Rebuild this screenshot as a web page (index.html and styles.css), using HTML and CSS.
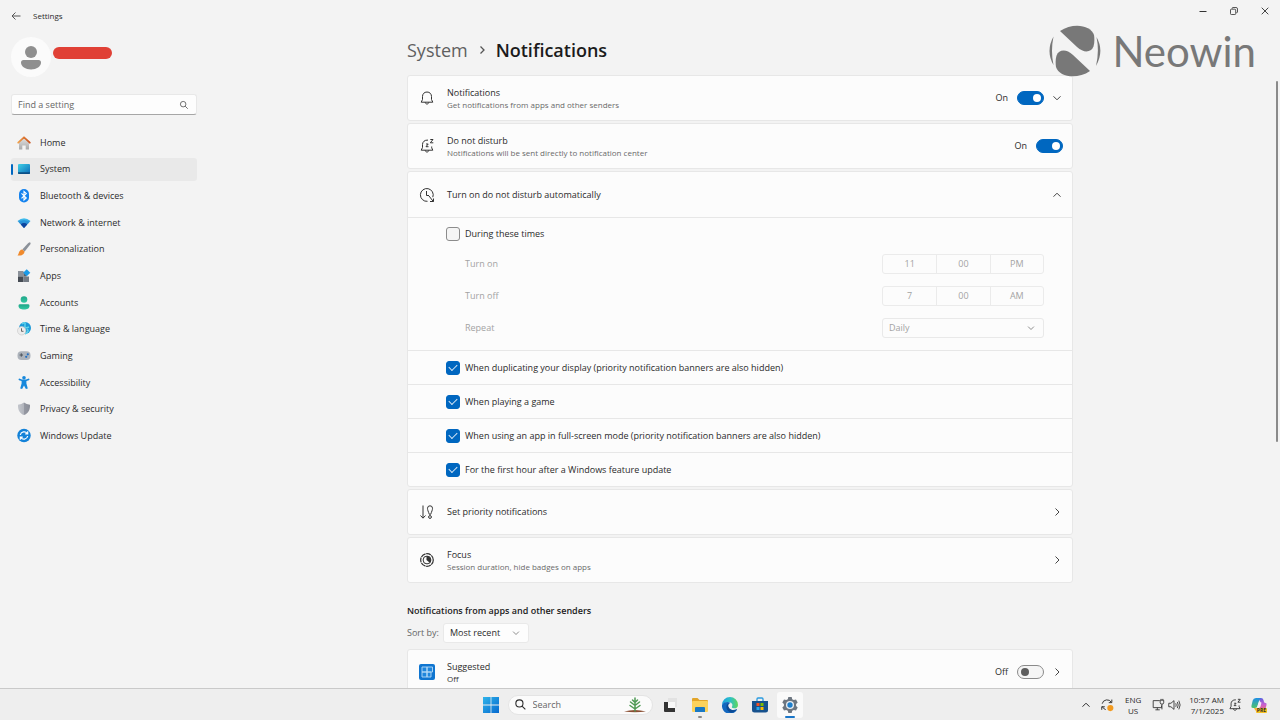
FILE: index.html
```html
<!DOCTYPE html>
<html lang="en">
<head>
<meta charset="utf-8">
<title>Settings</title>
<meta name="viewport" content="width=device-width, initial-scale=1">
<link rel="stylesheet" href="styles.css">
</head>
<body>
<svg class="defs" aria-hidden="true">
  <defs>
    <linearGradient id="g-sys" x1="0" y1="0" x2="1" y2="1"><stop offset="0" stop-color="#3fd0e6"/><stop offset="1" stop-color="#0a6ab8"/></linearGradient>
    <linearGradient id="g-roof" x1="0" y1="0" x2="1" y2="0"><stop offset="0" stop-color="#f0a04b"/><stop offset="1" stop-color="#c9501c"/></linearGradient>
    <linearGradient id="g-wall" x1="0" y1="0" x2="0" y2="1"><stop offset="0" stop-color="#e4e4e4"/><stop offset="1" stop-color="#a9a9a9"/></linearGradient>
    <linearGradient id="g-net" x1="0" y1="0" x2="0" y2="1"><stop offset="0" stop-color="#45c6f2"/><stop offset="1" stop-color="#0a4fb0"/></linearGradient>
    <linearGradient id="g-acc" x1="0" y1="0" x2="0" y2="1"><stop offset="0" stop-color="#1fa588"/><stop offset="1" stop-color="#35c9a4"/></linearGradient>
    <linearGradient id="g-shield" x1="0" y1="0" x2="1" y2="0"><stop offset="0" stop-color="#c3c6cc"/><stop offset=".5" stop-color="#b0b3bb"/><stop offset=".51" stop-color="#9598a2"/><stop offset="1" stop-color="#8a8d97"/></linearGradient>
    <linearGradient id="g-win" x1="0" y1="0" x2="1" y2="1"><stop offset="0" stop-color="#2fb4ea"/><stop offset="1" stop-color="#0669cf"/></linearGradient>
    <linearGradient id="g-edge" x1="0" y1="0" x2="1" y2="0"><stop offset="0" stop-color="#1d9fe0"/><stop offset=".5" stop-color="#2bbfc9"/><stop offset="1" stop-color="#62d75a"/></linearGradient>
    <linearGradient id="g-cop" x1="0" y1="0" x2="0" y2="1"><stop offset="0" stop-color="#5c5fe0"/><stop offset=".5" stop-color="#c860d0"/><stop offset="1" stop-color="#f0706a"/></linearGradient>
    <linearGradient id="g-cop2" x1="0" y1="0" x2="0" y2="1"><stop offset="0" stop-color="#1e8fe6"/><stop offset="1" stop-color="#4fc26a"/></linearGradient>
    <symbol id="i-down" viewBox="0 0 12 12"><path d="M2.500 4.300L6 7.800l3.500-3.500" fill="none" stroke="currentColor"/></symbol>
    <symbol id="i-up" viewBox="0 0 12 12"><path d="M2.500 7.700L6 4.200l3.500 3.500" fill="none" stroke="currentColor"/></symbol>
    <symbol id="i-right" viewBox="0 0 12 12"><path d="M4.500 2.500L8 6l-3.500 3.500" fill="none" stroke="currentColor"/></symbol>
    <symbol id="i-search" viewBox="0 0 12 12"><path d="M8.300 5a3.300 3.300 0 1 1-6.600 0a3.300 3.300 0 0 1 6.600 0zM7.400 7.400L10.500 10.500" fill="none" stroke="currentColor"/></symbol>
    <symbol id="i-dnd" viewBox="0 0 16 16"><path d="M9 2.100C5.500 1.800 3.500 4 3.500 6.500V9.500L2.200 12.200H13.800L12.700 9.800V8.500M6.200 12.300c.3 2.300 3.300 2.300 3.600 0" fill="none" stroke="currentColor" stroke-linejoin="round"/><path d="M7 6h2.200L7 8.700h2.500M11.300 1.500h2.700L11.300 4.800h3" fill="none" stroke="currentColor"/></symbol>
  </defs>
</svg>

<div class="screen">
  <div class="window">
    <header class="titlebar">
      <button class="icon-btn back" aria-label="Back"><svg viewBox="0 0 12 12"><path d="M10.500 6H2M5.500 2.500L2 6l3.500 3.500" fill="none" stroke="#555"/></svg></button>
      <span class="app-name">Settings</span>
      <div class="caption-btns">
        <button aria-label="Minimize"><svg viewBox="0 0 12 12"><path d="M2.500 6.500h7" stroke="#333" fill="none"/></svg></button>
        <button aria-label="Restore"><svg viewBox="0 0 12 12"><path d="M2.500 5a.8.8 0 0 1 .8-.8h3.600a.8.8 0 0 1 .8.8v3.700a.8.8 0 0 1-.8.8H3.300a.8.8 0 0 1-.8-.8zM4.200 3.800V3.200q0-.7.7-.7H8q1.500 0 1.500 1.500v3q0 .8-1.200.8" stroke="#444" stroke-width=".9" fill="none"/></svg></button>
        <button aria-label="Close"><svg viewBox="0 0 12 12"><path d="M2.700 2.700l6.600 6.600M9.300 2.700L2.700 9.300" stroke="#444" fill="none"/></svg></button>
      </div>
    </header>

    <div class="body">
      <aside class="sidebar">
        <div class="profile">
          <div class="avatar"><svg viewBox="0 0 40 40"><circle cx="20" cy="15" r="6" fill="#8f8f8f"/><path d="M12.500 23h15q2.500 0 2.500 2.500c0 4-4.500 7-10 7s-10-3-10-7Q10 23 12.500 23z" fill="#8f8f8f"/></svg></div>
          <div class="redacted"></div>
        </div>
        <label class="find">
          <input type="text" placeholder="Find a setting" aria-label="Find a setting">
          <svg viewBox="0 0 12 12"><use href="#i-search"/></svg>
        </label>
        <nav class="nav">
          <a href="#"><svg viewBox="0 0 16 16"><path d="M3 7l5-4.500L13 7v7.500H9.700v-4H6.300v4H3z" fill="url(#g-wall)"/><path d="M2.200 7.700L8 2.300l5.800 5.400" fill="none" stroke="url(#g-roof)" stroke-width="1.800" stroke-linecap="round" stroke-linejoin="round"/></svg><span>Home</span></a>
          <a href="#" class="active" aria-current="page"><svg viewBox="0 0 16 16"><rect x="2" y="3" width="12" height="10" rx="1" fill="url(#g-sys)"/><path d="M2 11.300h12v.7q0 1-1 1H3q-1 0-1-1z" fill="#0b4f86"/></svg><span>System</span></a>
          <a href="#"><svg viewBox="0 0 16 16"><rect x="3" y="1" width="10" height="13.500" rx="5" fill="#1583ee"/><path d="M5.500 5.300L10.300 10 8 12V3.500l2.300 2.100L5.500 10.300" fill="none" stroke="#fff" stroke-width="1.100"/></svg><span>Bluetooth &amp; devices</span></a>
          <a href="#"><svg viewBox="0 0 16 16"><path d="M1.500 6Q8 .5 14.500 6L8 13z" fill="url(#g-net)"/><path d="M4.800 9.400Q8 6.600 11.200 9.400L8 13z" fill="#0d449e"/><path d="M3.500 7.700Q8 4 12.500 7.700" fill="none" stroke="#238fdc"/></svg><span>Network &amp; internet</span></a>
          <a href="#"><svg viewBox="0 0 16 16"><path d="M13.900 1.300c1 .5.8 1.500.3 2.300L8.700 10.500 6.300 8.600 12.300 2z" fill="#8b9199"/><path d="M6.200 8.600l2.400 2C8.400 13.500 5.500 15 1.500 14.500 3.300 13.200 2.500 9 6.200 8.600z" fill="#f08a2c"/></svg><span>Personalization</span></a>
          <a href="#"><svg viewBox="0 0 16 16"><rect x="2" y="3" width="5.500" height="5.500" fill="#8b9199"/><rect x="2" y="8.500" width="5.500" height="5.500" fill="#454b53"/><rect x="7.500" y="8.500" width="5.500" height="5.500" fill="#747b84"/><path d="M7.500 4h3v4.500h-3z" fill="#5a616a"/><path d="M10.700 1.300l3.600 3.500-3.600 3.500-3.500-3.500z" fill="#1b9be8"/></svg><span>Apps</span></a>
          <a href="#"><svg viewBox="0 0 16 16"><circle cx="8" cy="4.500" r="3.300" fill="url(#g-acc)"/><path d="M4 9.300h8q1.500 0 1.500 1.400C13.500 13.500 11 14.500 8 14.500s-5.500-1-5.500-3.800Q2.500 9.300 4 9.300z" fill="url(#g-acc)"/></svg><span>Accounts</span></a>
          <a href="#"><svg viewBox="0 0 16 16"><circle cx="9" cy="7" r="6" fill="#1c9ad8"/><path d="M6 3q4-3 3 1T13 6M9 13q5-3 2-5" fill="none" stroke="#5fd3ea" stroke-width="1.500"/><circle cx="5.700" cy="9.800" r="4.200" fill="#ececec" stroke="#c4c4c4" stroke-width=".6"/><path d="M5.500 7.300v3h2" fill="none" stroke="#666"/></svg><span>Time &amp; language</span></a>
          <a href="#"><svg viewBox="0 0 16 16"><rect x="1.500" y="3.300" width="13" height="8.700" rx="4" fill="#adb3bb"/><path d="M3.600 7h3.400M5.300 5.300v3.400" stroke="#4d545d"/><circle cx="10.200" cy="8.800" r="1.100" fill="#236fc2"/><circle cx="11.800" cy="6.300" r="1.100" fill="#236fc2"/></svg><span>Gaming</span></a>
          <a href="#"><svg viewBox="0 0 16 16"><circle cx="8" cy="2.700" r="1.800" fill="#1688dc"/><path d="M3.500 4.500Q8 6.500 12.500 4.500" fill="none" stroke="#1688dc" stroke-width="1.900" stroke-linecap="round"/><path d="M5.600 5h4.800v3.500l1.400 5-1.900.6L8 10.600 6.100 14.100l-1.900-.6 1.400-5z" fill="#1688dc"/></svg><span>Accessibility</span></a>
          <a href="#"><svg viewBox="0 0 16 16"><path d="M8 1.500q2.500 2 6 2.200c.3 5.300-1.800 8.700-6 10.400-4.200-1.700-6.300-5.100-6-10.400Q5.500 3.500 8 1.500z" fill="url(#g-shield)"/></svg><span>Privacy &amp; security</span></a>
          <a href="#"><svg viewBox="0 0 16 16"><circle cx="8" cy="7.500" r="6.700" fill="#1382d8"/><path d="M4.300 7A3.900 3.900 0 0 1 11.300 5.500M11.700 3.300v2.500H9.200M11.700 8A3.900 3.900 0 0 1 4.700 9.500M4.300 11.700V9.200h2.500" fill="none" stroke="#fff" stroke-width="1.200"/></svg><span>Windows Update</span></a>
        </nav>
      </aside>

      <main class="main">
        <div class="column">
          <h1 class="crumbs"><a href="#">System</a><svg viewBox="0 0 12 12"><path d="M4.500 2.500L8 6l-3.500 3.500" fill="none" stroke="currentColor" stroke-width="1.300"/></svg><span>Notifications</span></h1>

          <div class="cards">
            <section class="card row">
              <svg class="lead" viewBox="0 0 16 16"><path d="M8 2C5.200 2 3.500 4 3.500 6.500V9.500L2.200 12.200H13.800L12.500 9.500V6.500C12.500 4 10.800 2 8 2zM6.200 12.300c.3 2.300 3.300 2.300 3.600 0" fill="none" stroke="currentColor" stroke-linejoin="round"/></svg>
              <div class="text"><label for="t1">Notifications</label><small>Get notifications from apps and other senders</small></div>
              <span class="state">On</span><input class="toggle" type="checkbox" role="switch" id="t1" checked>
              <button class="icon-btn" aria-label="Expand"><svg viewBox="0 0 12 12"><use href="#i-down"/></svg></button>
            </section>
            <section class="card row">
              <svg class="lead" viewBox="0 0 16 16"><use href="#i-dnd"/></svg>
              <div class="text"><label for="t2">Do not disturb</label><small>Notifications will be sent directly to notification center</small></div>
              <span class="state">On</span><input class="toggle" type="checkbox" role="switch" id="t2" checked>
            </section>
            <section class="card group">
              <div class="row">
                <svg class="lead" viewBox="0 0 16 16"><path d="M8.500 14.300A6.400 6.400 0 1 1 13.800 10.200M7.500 4v4.500h2.500M10 9l4.300 5.500M14.500 11.500v3H11" fill="none" stroke="currentColor"/></svg>
                <div class="text"><span>Turn on do not disturb automatically</span></div>
                <button class="icon-btn" aria-label="Collapse"><svg viewBox="0 0 12 12"><use href="#i-up"/></svg></button>
              </div>
              <div class="times">
                <label class="check"><input type="checkbox"><span>During these times</span></label>
                <div class="field"><span>Turn on</span><div class="picker" role="group" aria-label="Turn on"><button disabled>11</button><button disabled>00</button><button disabled>PM</button></div></div>
                <div class="field"><span>Turn off</span><div class="picker" role="group" aria-label="Turn off"><button disabled>7</button><button disabled>00</button><button disabled>AM</button></div></div>
                <div class="field"><label for="repeat">Repeat</label><div class="combo wide"><select id="repeat" disabled><option>Daily</option></select><svg viewBox="0 0 12 12"><use href="#i-down"/></svg></div></div>
              </div>
              <label class="check option"><input type="checkbox" checked><span>When duplicating your display (priority notification banners are also hidden)</span></label>
              <label class="check option"><input type="checkbox" checked><span>When playing a game</span></label>
              <label class="check option"><input type="checkbox" checked><span>When using an app in full-screen mode (priority notification banners are also hidden)</span></label>
              <label class="check option"><input type="checkbox" checked><span>For the first hour after a Windows feature update</span></label>
            </section>
            <section class="card row">
              <svg class="lead" viewBox="0 0 16 16"><path d="M4 1.500v12.500M1.500 11.500L4 14.200 6.500 11.500M10.300 10.300C9.300 7.500 8.500 6 8.500 4.300a2.500 2.500 0 0 1 5 0c0 1.700-.8 3.200-1.800 6z" fill="none" stroke="currentColor"/><circle cx="11" cy="13" r="1.400" fill="none" stroke="currentColor"/></svg>
              <div class="text"><span>Set priority notifications</span></div>
              <button class="icon-btn" aria-label="Open"><svg viewBox="0 0 12 12"><use href="#i-right"/></svg></button>
            </section>
            <section class="card row">
              <svg class="lead" viewBox="0 0 16 16"><circle cx="8" cy="8" r="6.300" fill="none" stroke="currentColor" stroke-width="1.200" stroke-dasharray="5 .6"/><circle cx="8" cy="8" r="3.900" fill="none" stroke="currentColor"/><path d="M7.500 4a4 4 0 0 1 3.300 6.800L7.500 8z" fill="currentColor"/></svg>
              <div class="text"><span>Focus</span><small>Session duration, hide badges on apps</small></div>
              <button class="icon-btn" aria-label="Open"><svg viewBox="0 0 12 12"><use href="#i-right"/></svg></button>
            </section>
          </div>

          <h2 class="section-title">Notifications from apps and other senders</h2>
          <div class="sort"><label for="sort">Sort by:</label><div class="combo"><select id="sort"><option>Most recent</option></select><svg viewBox="0 0 12 12"><use href="#i-down"/></svg></div></div>

          <section class="card row">
            <svg class="lead" viewBox="0 0 16 16"><rect width="16" height="16" rx="2" fill="#0f75d0"/><path d="M3 3h5v5H3zM3 8h5v5H3zM8 8h4v5H8zM8 3h5.500v5H8z" fill="#1f86dc" stroke="#b5daf7" stroke-width=".9"/></svg>
            <div class="text"><label for="t3">Suggested</label><small class="dark">Off</small></div>
            <span class="state">Off</span><input class="toggle" type="checkbox" role="switch" id="t3">
            <button class="icon-btn" aria-label="Open"><svg viewBox="0 0 12 12"><use href="#i-right"/></svg></button>
          </section>
        </div>
      </main>
    </div>
    <div class="scrollbar"></div>
    <div class="watermark">
      <svg viewBox="0 0 52 52"><path d="M11 6C24-3 42 0 45 10C46 17 45 23 42 25Q36 29 28 22Z"/><path d="M41 46C28 55 10 52 7 42C6 35 7 29 10 27Q16 23 24 30Z"/><path d="M4.500 11.500Q-3.500 26 4.500 40Q1.500 26 4.500 11.500zM47.500 12Q55.500 26 47 41Q50.500 26 47.500 12z"/></svg>
      <span>Neowin</span>
    </div>
  </div>

  <footer class="taskbar">
    <div class="apps">
      <button aria-label="Start"><svg viewBox="0 0 16 16"><path d="M0 0h7.600v7.600H0zM8.400 0H16v7.600H8.400zM0 8.400h7.600V16H0zM8.400 8.400H16V16H8.400z" fill="url(#g-win)"/></svg></button>
      <label class="task-search"><svg viewBox="0 0 12 12"><use href="#i-search"/></svg><input type="text" placeholder="Search" aria-label="Search"><svg class="plant" viewBox="0 0 24 16"><path d="M1 14.500Q12 11.500 23 14.500Q12 16 1 14.500z" fill="#8a4f33"/><path d="M12 14V1M12 12L7 8.500M12 12l5-3.500M12 8.500L7.500 5M12 8.500L16.500 5M12 5.500L9.500 3M12 5.500L14.500 3" fill="none" stroke="#4f9a55" stroke-width="1.500" stroke-linecap="round"/></svg></label>
      <button aria-label="Task view"><svg viewBox="0 0 16 16"><rect x="6" y="1" width="9" height="9" fill="#e2e2e2"/><path d="M2 5h4v6h7v4H3q-1 0-1-1z" fill="#333"/><path d="M6 5h7v6H6z" fill="#f8f8f8"/></svg></button>
      <button class="running" aria-label="File Explorer"><svg viewBox="0 0 16 16"><path d="M0 2q0-1 1-1h4.500L7.500 3H15q1 0 1 1v3H0z" fill="#e2a52a"/><path d="M0 5q0-1 1-1h14q1 0 1 1v9q0 1-1 1H1q-1 0-1-1z" fill="#fbd25c"/><path d="M3 15v-4q0-1 1-1h8q1 0 1 1v4z" fill="#1878c4"/></svg></button>
      <button aria-label="Edge"><svg viewBox="0 0 16 16"><path d="M0 8a8 8 0 0 1 16 0c0 2.500-2 3.500-4 3.300-2-.1-2.500-1-1.900-1.800C11.500 7 8.500 4.500 5 5.200 2.500 5.700.8 7 0 8z" fill="url(#g-edge)"/><path d="M0 8c1-2.500 6-4 8.500-2C5.500 6.500 5 9.500 7 11.500c2 1.800 5 1.800 7.500.8.500-.2.700.1.400.5A8 8 0 0 1 0 8z" fill="#1267bf"/><path d="M4.500 9C4 12 6 15 9.500 15.800 13 15.200 14.500 13.200 14.900 12.600c-4 1.500-7.700 0-8.500-3.100C6 8 6.500 7 7.500 6.200 5.500 6.300 4.700 7.500 4.500 9z" fill="#0c4a94"/></svg></button>
      <button aria-label="Store"><svg viewBox="0 0 16 16"><path d="M5 4V2q0-1 1-1h4q1 0 1 1v2" fill="none" stroke="#2a9be0" stroke-width="1.300"/><path d="M0 4h16v9q0 2.500-2.500 2.500h-11Q0 15.500 0 13z" fill="#16518d"/><path d="M4.500 6h3v3h-3z" fill="#f25022"/><path d="M8.500 6h3v3h-3z" fill="#7fba00"/><path d="M4.500 10h3v3h-3z" fill="#29a9ea"/><path d="M8.500 10h3v3h-3z" fill="#ffb900"/></svg></button>
      <button class="current" aria-label="Settings"><svg viewBox="0 0 16 16"><path d="M6.300 0h3.400l.5 2.200 1.600.9 2.200-.7 1.700 3L14.100 7v2l1.600 1.600-1.700 3-2.200-.7-1.600.9-.5 2.200H6.300l-.5-2.200-1.600-.9-2.200.7-1.700-3L1.900 9V7L.3 5.400l1.700-3 2.200.7 1.600-.9z" fill="#6d7680"/><circle cx="8" cy="8" r="4" fill="#e9eef3"/><circle cx="8" cy="8" r="2.700" fill="#1f7fcb"/></svg></button>
    </div>
    <div class="tray">
      <svg class="more" viewBox="0 0 12 12"><use href="#i-up"/></svg>
      <svg class="sync" viewBox="0 0 16 16"><path d="M2.500 6.500A5.700 5.700 0 0 1 13 5M13.500 1.800v3.500H10M6.500 13.300Q3.500 12.300 2.500 9.500M2 13.500V10h3.500" fill="none" stroke="#333" stroke-width="1.100"/><circle cx="11.800" cy="11.500" r="3.500" fill="#f29a1f"/></svg>
      <div class="lang">ENG<br>US</div>
      <svg class="net" viewBox="0 0 16 16"><path d="M10 3H2.500v8H12V8.500M5 13.500h5M7.200 11v2.500M10.500 2.500h4v3q0 1.500-2 1.500t-2-1.500zM11.500 1v1.500M13.500 1v1.500M12.500 7v6" fill="none" stroke="#333"/></svg>
      <svg class="vol" viewBox="0 0 16 16"><path d="M2 6h2.500L8 3v10L4.500 10H2zM10 6q1 2 0 4M11.800 4.500q2 3.500 0 7M13.500 3q3 5 0 10" fill="none" stroke="#333"/></svg>
      <time class="clock">10:57 AM<br>7/1/2025</time>
      <svg class="bell" viewBox="0 0 16 16"><use href="#i-dnd"/></svg>
      <div class="copilot"><svg viewBox="0 0 16 16"><path d="M7 1h3q2 0 2.500 2l.5 2q.4 1 1.500 1Q16 6 15.500 8l-1 4q-.6 2-2.500 2H6q2-.5 2.500-3L10 6z" fill="url(#g-cop)"/><path d="M5 1h5Q8.500 1.500 8 4L6.500 9Q6 11 4 11H2Q0 11 .5 8.500l1.200-5Q2.300 1 5 1z" fill="url(#g-cop2)"/><path d="M3 11h3q-1 3 0 3h6H6q-2 0-2.500-2z" fill="#f2b23a"/><path d="M7.500 5.500h3L9.300 10h-3z" fill="#f4ebf8"/></svg><span>PRE</span></div>
    </div>
  </footer>
</div>
</body>
</html>
```
FILE: styles.css
```css
* { box-sizing: border-box; }
body {
  margin: 0;
  background: #f3f3f3;
  color: #2b2b2b;
  font: 9px/12px "Open Sans", "Noto Sans", sans-serif;
}
a { color: inherit; text-decoration: none; }
button, input, select { font: inherit; color: inherit; margin: 0; padding: 0; }
svg { display: block; flex: none; }
.defs { position: absolute; width: 0; height: 0; }

.screen { display: flex; flex-direction: column; height: 100vh; }
.window { position: relative; flex: 1; min-height: 0; overflow: hidden; display: flex; flex-direction: column; }

.titlebar { display: flex; align-items: center; height: 32px; padding-left: 10px; flex: none; }
.icon-btn { border: 0; background: none; width: 12px; height: 12px; color: #444; flex: none; }
.icon-btn svg { width: 12px; height: 12px; }
.app-name { margin-left: 11px; font-size: 8px; }
.caption-btns { display: flex; align-self: flex-start; margin-left: auto; }
.caption-btns button { display: grid; place-items: center; width: 31px; height: 22px; border: 0; background: none; }
.caption-btns svg { width: 12px; height: 12px; }

.body { display: flex; flex: 1; min-height: 0; }
.sidebar { width: 208px; flex: none; padding: 5px 11px 0; }
.profile { display: flex; gap: 2px; }
.avatar { width: 40px; height: 40px; border-radius: 50%; background: #fbfbfb; }
.redacted { width: 59px; height: 12px; margin-top: 10px; border-radius: 6px; background: #e04035; }
.find {
  display: flex; align-items: center; height: 21px; margin-top: 17px; padding: 0 7px 0 6px;
  background: #fdfdfd; border: 1px solid #e8e8e8; border-bottom-color: #a6a6a6; border-radius: 3px;
}
.find input { flex: 1; min-width: 0; border: 0; background: none; outline: 0; }
.find svg { width: 10px; height: 10px; color: #555; }
::placeholder { color: #666; opacity: 1; }

.nav { display: grid; grid-auto-rows: 1fr; gap: 3px; height: 317px; margin-top: 16px; }
.nav a { position: relative; display: flex; align-items: center; gap: 8px; padding-left: 5px; border-radius: 3px; }
.nav svg { width: 16px; height: 16px; }
.nav .active { background: #e9e9e9; }
.nav .active::before { content: ""; position: absolute; left: 0; top: 6px; bottom: 6px; width: 2px; border-radius: 1px; background: #0067c0; }

.main { flex: 1; min-width: 0; padding-right: 8px; }
.column { max-width: 666px; margin: 0 auto; }
.crumbs { display: flex; align-items: center; height: 24px; margin: 6px 0 13px; font-size: 18px; line-height: 24px; font-weight: 600; color: #1b1b1b; }
.crumbs a { color: #5f5f5f; font-weight: 400; }
.crumbs svg { width: 12px; height: 12px; margin: 0 8px; color: #555; }

.cards { display: flex; flex-direction: column; gap: 2px; }
.card { background: #fcfcfc; border: 1px solid #e7e7e7; border-radius: 3px; }
.row { display: flex; align-items: center; min-height: 46px; padding: 0 9px 0 11px; }
.lead { width: 16px; height: 16px; margin-right: 12px; color: #333; }
.text { display: flex; flex-direction: column; flex: 1; min-width: 0; }
.text small { font-size: 8px; line-height: 11px; color: #6a6a6a; }
.text .dark { color: #333; }
.state { margin-right: 9px; }
.toggle {
  appearance: none; width: 27px; height: 14px; flex: none; padding: 3px; border: 1px solid #8a8a8a; border-radius: 7px;
  background: #f5f5f5; display: flex; align-items: center;
}
.toggle::before { content: ""; width: 8px; height: 8px; border-radius: 50%; background: #5d5d5d; }
.toggle:checked { justify-content: flex-end; padding: 2px; background: #0067c0; border-color: #0067c0; }
.toggle:checked::before { background: #fff; }
.toggle + .icon-btn { margin-left: 7px; }

.times { display: flex; flex-direction: column; gap: 12px; padding: 9px 28px 12px 38px; border-top: 1px solid #e7e7e7; }
.times .check { margin-bottom: 1px; }
.check { display: flex; align-items: center; gap: 5px; }
.check input {
  appearance: none; display: grid; place-items: center; width: 14px; height: 14px; flex: none;
  border: 1px solid #8c8c8c; border-radius: 3px; background: #f5f5f5;
}
.check input:checked { background: #0067c0; border-color: #0067c0; }
.check input:checked::before { content: ""; width: 7px; height: 4px; margin-top: -2px; border: solid #d5e6f5; border-width: 0 0 1px 1px; transform: rotate(-45deg); }
.option { height: 34px; padding-left: 38px; border-top: 1px solid #e7e7e7; }
.group .row { min-height: 45px; }
.field { display: flex; align-items: center; justify-content: space-between; padding-left: 19px; color: #a3a3a3; }
.picker { display: grid; grid-template-columns: repeat(3, 1fr); width: 162px; height: 20px; border: 1px solid #ebebeb; border-radius: 3px; }
.picker button { border: 0; background: none; }
.picker button + button { border-left: 1px solid #ebebeb; }

.combo { display: grid; align-items: center; width: 86px; height: 20px; border: 1px solid #e9e9e9; border-radius: 3px; background: #fdfdfd; }
.combo.wide { width: 162px; background: none; }
.combo > * { grid-area: 1 / 1; }
.combo select { appearance: none; width: 100%; padding: 0 6px; border: 0; background: none; opacity: 1; outline: 0; }
.combo svg { width: 10px; height: 10px; margin-right: 7px; justify-self: end; pointer-events: none; color: #777; }

.section-title { margin: 22px 0 6px; font-size: 9px; line-height: 12px; font-weight: 600; color: #1b1b1b; }
.sort { display: flex; align-items: center; gap: 4px; margin-bottom: 6px; color: #666; }
.sort .combo { color: #2b2b2b; }

.scrollbar { position: absolute; right: 2px; top: 81px; width: 2px; height: 361px; border-radius: 1px; background: #8a8a8a; }
.watermark { position: absolute; right: 24px; top: 25px; display: flex; align-items: center; gap: 11px; color: #787878; font: 42px/52px Lato, sans-serif; }
.watermark svg { width: 52px; height: 52px; fill: currentColor; }

.taskbar {
  display: grid; grid-template-columns: 1fr auto 1fr; align-items: center; height: 32px; flex: none;
  background: #eeeeee; border-top: 1px solid #c9c9c9;
}
.apps { grid-column: 2; display: flex; align-items: center; gap: 4px; }
.apps button { position: relative; display: grid; place-items: center; width: 26px; height: 26px; border: 0; border-radius: 3px; background: none; }
.apps button svg { width: 16px; height: 16px; }
.apps .current { background: #fafafa; }
.apps .current::after, .apps .running::after { content: ""; position: absolute; bottom: 0; left: 8px; right: 8px; height: 2px; border-radius: 1px; background: #1976c9; }
.apps .running::after { left: 11px; right: 11px; background: #888; }
.task-search { display: flex; align-items: center; gap: 6px; width: 145px; height: 20px; padding: 0 5px; border: 1px solid #e4e4e4; border-radius: 10px; background: #fbfbfb; }
.task-search svg { width: 13px; height: 13px; }
.task-search input { flex: 1; min-width: 0; border: 0; background: none; outline: 0; }
.task-search .plant { width: 24px; height: 16px; }
.tray { display: flex; align-items: center; justify-content: flex-end; gap: 4px; padding-right: 13px; font-size: 8px; line-height: 11px; }
.tray svg { width: 14px; height: 14px; }
.tray .more { width: 12px; height: 12px; margin-right: 4px; }
.lang { margin: 0 6px 0 7px; text-align: center; }
.tray .net { margin-right: -2px; }
.clock { margin-left: 4px; text-align: right; }
.copilot { position: relative; margin-left: 5px; }
.tray .copilot svg { width: 16px; height: 16px; }
.copilot span { position: absolute; right: 0; bottom: 0; padding: 0 1px; border-radius: 1px; background: #f5c021; font-size: 5px; line-height: 5px; font-weight: 700; }
```
